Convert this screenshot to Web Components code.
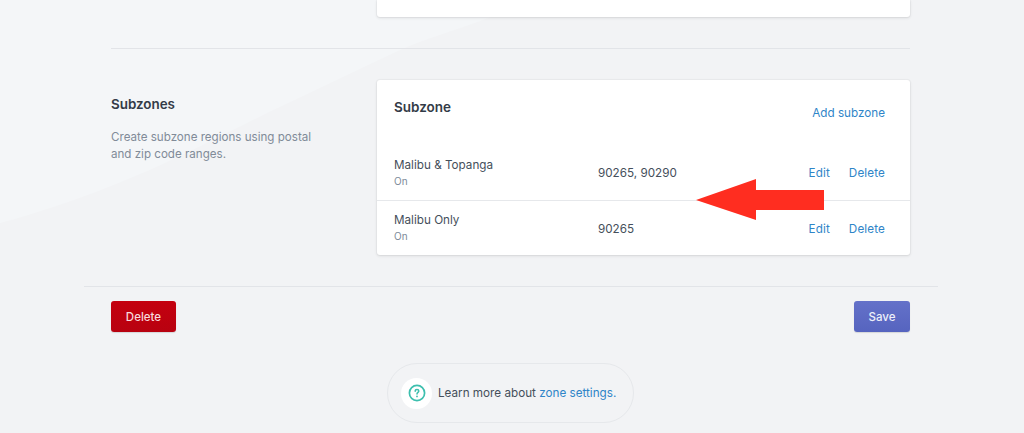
<!DOCTYPE html>
<html lang="en"><head><meta charset="utf-8"><title>Subzones</title>
<style>
html,body{margin:0;padding:0;height:433px;overflow:hidden;background:#f2f3f5;font-family:Inter,"Liberation Sans",sans-serif}
</style></head>
<body>
<settings-page></settings-page>
<script>
function def(name, html){
  customElements.define(name, class extends HTMLElement{
    constructor(){super();this.attachShadow({mode:'open'}).innerHTML=html;}
  });
}
def('app-link',`<style>:host{display:inline;color:#2f85c8}</style><slot></slot>`);
def('app-button',`<style>
:host{display:flex;align-items:center;justify-content:center;box-sizing:border-box;height:31px;border-radius:3px;font-size:11.5px;font-weight:500;cursor:pointer}
:host([tone=danger]){width:65px;background:linear-gradient(#c4000f,#b80210);color:#f8d9dc;box-shadow:0 1px 1px rgba(0,0,0,.12)}
:host([tone=primary]){width:56px;background:linear-gradient(#6471c9,#5664bf);color:#eef0fa;box-shadow:0 1px 1px rgba(0,0,0,.12)}
</style><slot></slot>`);
def('zone-card',`<style>:host{display:block;box-sizing:border-box;background:#fff;border-radius:3px;box-shadow:0 0 0 1px rgba(63,63,68,.03),0 1px 3px rgba(63,63,68,.14)}</style><slot></slot>`);
def('subzone-row',`<style>
:host{display:grid;grid-template-columns:204px 1fr auto auto;align-items:center;box-sizing:border-box;height:55.5px;padding:0 25px 0 17px;font-size:11.7px;color:#454f5b}
:host(:not(:last-child)){border-bottom:1px solid #e6e8eb}
:host(:last-child){height:54.5px}
:host(:last-child) .name{padding-bottom:1px}
:host(:last-child) .s{margin-top:.5px}
.name{display:flex;flex-direction:column;gap:1.5px}
.n{line-height:16px}
.s{font-size:10px;line-height:13px;color:#7d8a98}
.c,.e,.d{padding-top:2px}
.e,.d{letter-spacing:.12px}
.e{margin-right:19px}
</style>
<div class="name"><span class="n"><slot name="name"></slot></span><span class="s"><slot name="status"></slot></span></div>
<span class="c"><slot name="codes"></slot></span>
<app-link class="e">Edit</app-link><app-link class="d">Delete</app-link>`);
def('subzone-section',`<style>
:host{display:block}
.layout{display:grid;grid-template-columns:266px 533px}
h2{margin:16px 0 0;font-size:13.4px;line-height:16px;font-weight:600;color:#333b47}
p{margin:17px 0 0;font-size:11.6px;line-height:17px;color:#818b98;width:215px}
.head{display:flex;justify-content:space-between;align-items:flex-start;padding:19px 25px 0 17px;height:65px;box-sizing:border-box}
h3{margin:0;font-size:13.5px;line-height:17px;font-weight:600;color:#333b47}
.add{margin-top:7px;font-size:11.7px;line-height:15px}
</style>
<div class="layout">
  <div><h2>Subzones</h2><p>Create subzone regions using postal and zip code ranges.</p></div>
  <zone-card>
    <div class="head"><h3>Subzone</h3><app-link class="add">Add subzone</app-link></div>
    <subzone-row><span slot="name">Malibu &amp; Topanga</span><span slot="status">On</span><span slot="codes">90265, 90290</span></subzone-row>
    <subzone-row><span slot="name">Malibu Only</span><span slot="status">On</span><span slot="codes">90265</span></subzone-row>
  </zone-card>
</div>`);
def('settings-page',`<style>
:host{display:block;position:relative;height:433px;overflow:hidden}
.bg{position:absolute;left:0;top:0;width:1024px;height:433px;z-index:0}
.arrow{position:absolute;left:696px;top:179px;width:128px;height:41px;z-index:2}
.wrap{position:relative;z-index:1;width:854px;margin-left:84px;box-sizing:border-box}
.pad{padding:0 28px 0 27px}
.topcard{display:grid;grid-template-columns:266px 533px}
.topcard zone-card{height:17px;grid-column:2;border-radius:0 0 3px 3px}
.rule{border-top:1px solid #e2e4e8;margin-top:31px}
.sec{margin-top:31px}
.foot{margin-top:31px;border-top:1px solid #e2e4e8;padding:14px 28px 0 27px;display:flex;justify-content:space-between}
.help{display:flex;justify-content:center;margin-top:31px;padding-right:1px}
.pill{display:flex;align-items:center;box-sizing:border-box;width:247px;height:60px;border:1px solid #e6e8eb;border-radius:30px;padding:0 0 0 13px;font-size:11.7px;color:#454f5b;white-space:nowrap}
.ic{width:31px;height:31px;background:#fff;border-radius:50%;display:flex;align-items:center;justify-content:center;margin-right:6px;flex:none}
.lk{color:#2f85c8}
</style>
<svg class="bg" viewBox="0 0 1024 433" aria-hidden="true"><path d="M0 0H540C520 7 500 13 483 20C450 32 425 39 400 50C355 71 312 92 267 113C222 135 178 158 133 177C88 196 42 212 0 223Z" fill="#f4f6f8"/></svg>
<div class="wrap">
  <div class="pad topcard"><zone-card></zone-card></div>
  <div class="pad"><div class="rule"></div></div>
  <div class="pad sec"><subzone-section></subzone-section></div>
  <div class="foot"><app-button tone="danger">Delete</app-button><app-button tone="primary">Save</app-button></div>
  <div class="help"><div class="pill"><span class="ic"><svg width="18" height="18" viewBox="0 0 18 18" fill="none"><circle cx="9" cy="9" r="7.6" stroke="#3dbfae" stroke-width="1.7"/><path d="M7.2 7.2C7.2 6.2 8 5.5 9 5.5C10 5.5 10.8 6.2 10.8 7.1C10.8 8.3 9 8.5 9 10" stroke="#3dbfae" stroke-width="1.5" stroke-linecap="round"/><circle cx="9" cy="12.4" r=".9" fill="#3dbfae"/></svg></span><span>Learn more about <span class="lk">zone settings.</span></span></div></div>
</div>
<svg class="arrow" viewBox="0 0 128 41" aria-hidden="true"><path d="M0 21L60 0V11H128V31H60V41Z" fill="#ff2d20"/></svg>`);
</script>
</body></html>
